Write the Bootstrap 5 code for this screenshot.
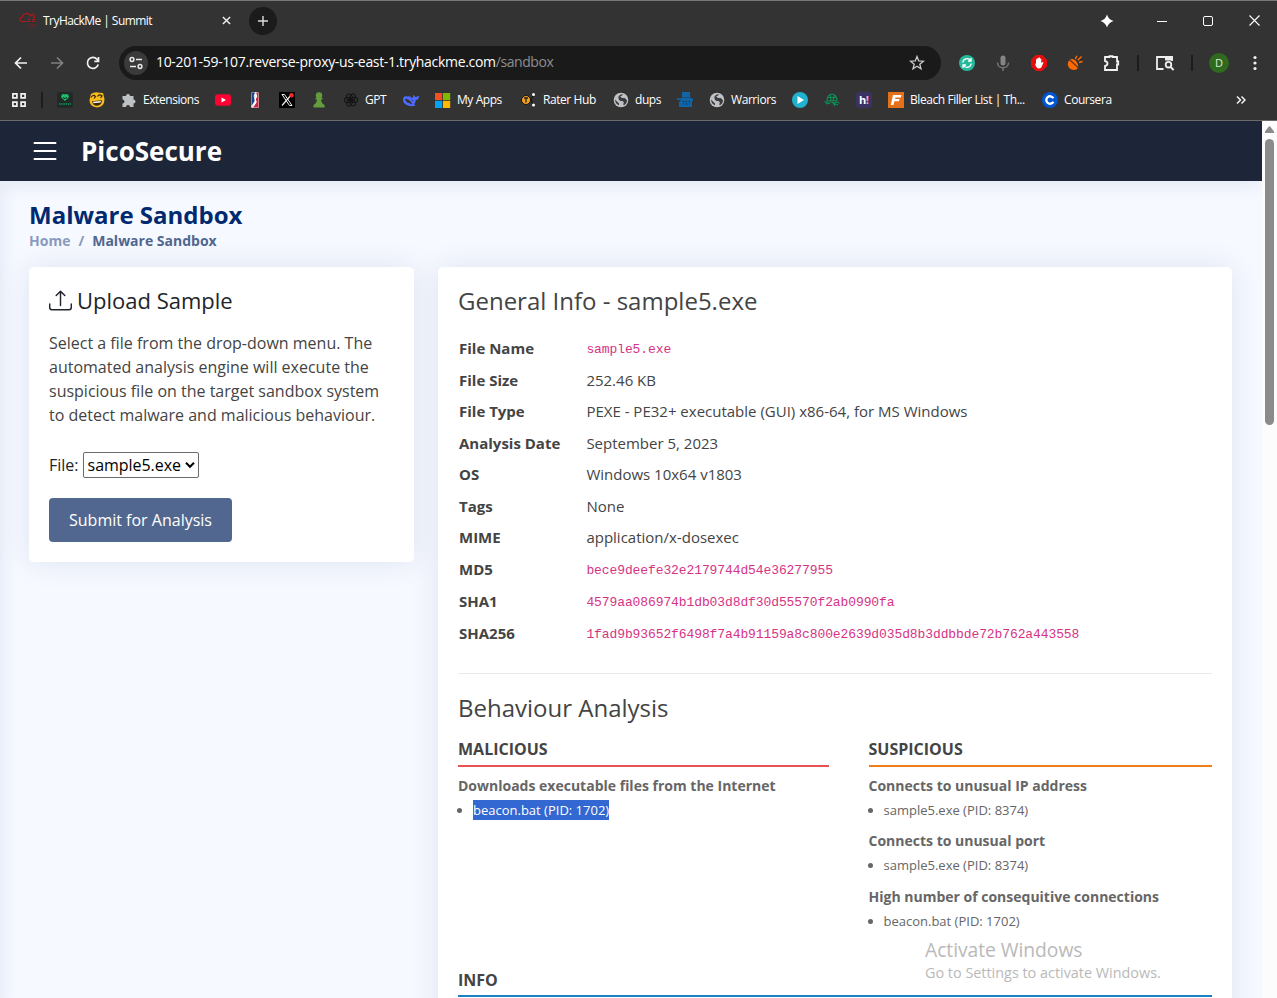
<!DOCTYPE html>
<html lang="en">
<head>
<meta charset="utf-8">
<title>TryHackMe | Summit</title>
<link rel="stylesheet" href="https://cdn.jsdelivr.net/npm/bootstrap@5.3.0/dist/css/bootstrap.min.css">
<style>
body{width:1277px;height:998px;overflow:hidden;font-family:"Open Sans","Noto Sans",sans-serif;color:#444;background:#f6f9ff}
svg{display:block;flex:none}
.chrome{height:121px;background:#333;border-top:1px solid #777;border-bottom:1px solid #6b6a68;color:#fff;font-size:12px}
.tabs{height:39px;padding-left:19px;padding-right:17px}
.tab-title{width:179px;letter-spacing:-.55px;margin-left:7px}
.newtab{width:28px;height:28px;background:#1b1b1b;border-radius:50%;margin-left:18px}
.sparkle{margin-right:43px}
.winbtn{margin-right:36px}
.toolbar{height:46px;padding-left:13px;padding-right:16px}
.toolbar .back{margin-right:20px}
.omni{width:822px;height:34px;border-radius:17px;background:#1a1a1a;margin-left:18px;padding:0 16px 0 5px;font-size:14px}
.site{width:24px;height:24px;border-radius:50%;background:#3a3a3a;margin-right:8px}
.host{letter-spacing:-.32px}
.path{color:#8d8f92;letter-spacing:-.42px}
.vsep{width:2px;height:16px;background:#1c1c1c}
.marks{height:28px;padding-left:12px}
.bm{gap:6px;margin-right:16px;white-space:nowrap;letter-spacing:-.43px}
.w-ext{width:56px}.w-gpt{width:22px}.w-app{width:48px}.w-rat{width:54px}.w-dup{width:26px}.w-war{width:45px}.w-ble{width:116px}.w-cou{width:48px}
.avatar{width:20px;height:20px;border-radius:50%;background:#2f6a1e;font-size:11px;color:#dcebd4}
.page{height:877px}
.view{width:1262px;overflow:hidden;background:#f6f9ff;position:relative}
.topnav{height:60px;background:#1d2538;box-shadow:0 2px 20px rgba(1,41,112,.1);padding:0 33px;gap:24px;position:relative;z-index:2}
.drawer{position:absolute;left:-20px;top:60px;width:20px;height:830px;box-shadow:0 0 20px rgba(1,41,112,.1)}
.brand{color:#fff;font-weight:700;font-size:26px;letter-spacing:0;line-height:30px}
.main{padding:20px 30px 0 29px}
.main h1{font-size:24px;line-height:28px;font-weight:700;color:#012970;margin:0}
.crumbs{font-size:14px;line-height:21px;font-weight:700;color:#899bbd;margin:1px 0 16px;gap:8px}
.crumbs b{color:#51678f;font-weight:700}
.panel{background:#fff;border:0;border-radius:5px;box-shadow:0 0 30px rgba(1,41,112,.1);padding:20px}
.upload{height:295px}
.upload h2{font-size:22px;line-height:26px;font-weight:400;color:#212529;gap:5px;margin:0 0 18px}
.upload p{font-size:16px;line-height:24px;margin:0 -10px 25px 0}
.pick{line-height:24px;height:26px;color:#212529;font-size:16px;gap:4px;margin-bottom:20px}
.pick .sel{width:116px;height:26px;border:1px solid #6b6b6b;border-radius:2px;color:#000;padding:0 3px 0 4px;letter-spacing:-.03px}
.send{width:183px;height:44px;padding:0;background:#51678f;border-radius:4px;color:#fff;font-size:16px}
.report{height:900px}
.report h2{font-size:24px;line-height:27px;font-weight:400;margin:0}
.facts{margin:18px 0 0 1px;width:752px}
.facts td,.facts th{height:31.5px;padding:0;font-size:15px;line-height:22px;vertical-align:middle}
.facts th{width:127.4px;font-weight:700}
.facts tr.mono td,.facts tr.mono th{height:32px}
.facts code{font-family:"Liberation Mono",monospace;font-size:13px;letter-spacing:-.1px;color:#d63384}
.rule{height:1px;background:#e9e9ea;margin:24px 0 20px}
.report .behaviour{margin-bottom:18px}
.group h3{font-size:16px;line-height:20px;font-weight:700;letter-spacing:0;margin:0;padding-bottom:6px;height:28px;border-bottom:2px solid}
.bad{border-color:#e55353!important}.sus{border-color:#ef7f1a!important}.inf{border-color:#1a82c3!important}
.group h4{font-size:14px;line-height:20px;font-weight:700;color:#666;margin:9px 0 4px}
.group ul{margin:0 0 11px;padding:0;list-style:none;font-size:13px;line-height:20px;color:#666}
.group li{display:flex;align-items:center;height:20px}
.group li::before{content:"";width:5px;height:5px;border-radius:50%;background:#666;margin:0 11px 0 -1px}
.group .more{margin-top:0}
.group .more + ul{margin-bottom:12px}
.final{margin-top:27px}
.final h3{height:27px;padding-bottom:5px}
.colA{width:371px;margin-right:39.5px}
.colB{flex:1}
.picked{background:#3367d1;color:#fff}
.water{position:absolute;left:925px;top:937px;color:#b9b9b9;z-index:5}
.water div:first-child{font-size:19.3px;line-height:26px;letter-spacing:-.05px}
.water div:last-child{font-size:14.4px;line-height:20px}
.scroll{width:15px;background:#fcfcfc;padding:5px 3px 0}
.thumb{width:9px;height:286px;border-radius:5px;background:#8b8b8b;margin-top:6px}
</style>
</head>
<body>
<div class="chrome">
  <div class="tabs d-flex align-items-center">
    <svg width="17" height="17" viewBox="0 0 17 17" fill="none" stroke="#b3161b" stroke-width="1.2"><path d="M7 9.500H3.200C-.3 9 .5 5 3.500 5 4 .8 9.500.2 11 4 14-.2 17 4.500 14.500 6.500"/><path d="M9 7.500h2M13 7.500h3M7.500 9.500h4M13 9.500h3" /><path d="M8 12.500h2M12 12.500h4M10 15.500h2M13.500 15.500h2" stroke="#7c1c1f"/></svg>
    <span class="tab-title text-nowrap">TryHackMe | Summit</span>
    <svg width="9" height="9" viewBox="0 0 10 10" stroke="#eee" stroke-width="1.600"><path d="M1 1l8 8M9 1l-8 8"/></svg>
    <div class="newtab d-flex align-items-center justify-content-center"><svg width="10" height="10" viewBox="0 0 10 10" stroke="#ddd" stroke-width="1.400"><path d="M5 0v10M0 5h10"/></svg></div>
    <div class="ms-auto d-flex align-items-center">
      <svg class="sparkle" width="14" height="14" viewBox="0 0 14 14" fill="#fff"><path d="M7 .5Q8.500 5.500 13.500 7 8.500 8.500 7 13.500 5.500 8.500.5 7 5.500 5.500 7 .5z"/></svg>
      <svg class="winbtn" width="10" height="10" viewBox="0 0 10 10" stroke="#fff"><path d="M0 5.500h10"/></svg>
      <svg class="winbtn" width="10" height="10" viewBox="0 0 10 10" fill="none" stroke="#fff"><rect x=".5" y=".5" width="9" height="9" rx="1.500"/></svg>
      <svg width="11" height="11" viewBox="0 0 11 11" stroke="#fff" stroke-width="1.100"><path d="M.5.500l10 10M10.500.500l-10 10"/></svg>
    </div>
  </div>
  <div class="toolbar d-flex align-items-center">
    <svg class="back" width="16" height="16" viewBox="0 0 16 16" fill="none" stroke="#f2f2f2" stroke-width="1.700"><path d="M14 8H3M8 2.500L2.500 8 8 13.500"/></svg>
    <svg class="back" width="16" height="16" viewBox="0 0 16 16" fill="none" stroke="#808080" stroke-width="1.700"><path d="M2 8h11M8 2.500L13.500 8 8 13.500"/></svg>
    <svg width="16" height="16" viewBox="0 0 16 16" fill="none" stroke="#f2f2f2" stroke-width="1.700"><path d="M13.200 9.500A5.500 5.500 0 1 1 12 4.200L13.500 6M13.500 2v4.300H9.300"/></svg>
    <div class="omni d-flex align-items-center">
      <div class="site d-flex align-items-center justify-content-center"><svg width="14" height="14" viewBox="0 0 14 14" fill="none" stroke="#e8e8e8" stroke-width="1.500"><circle cx="3" cy="3.500" r="1.900"/><path d="M7 3.500h6M1 10.500h6"/><circle cx="11" cy="10.500" r="1.900"/></svg></div>
      <span class="host text-nowrap pb-1">10-201-59-107.reverse-proxy-us-east-1.tryhackme.com</span><span class="path pb-1">/sandbox</span>
      <svg class="ms-auto" width="16" height="16" viewBox="0 0 16 16" fill="none" stroke="#ccc" stroke-width="1.300"><path d="M8 1.500l1.700 4.400 4.800.3-3.700 3 1.200 4.700L8 11.300l-4 2.600 1.200-4.700-3.700-3 4.800-.3z"/></svg>
    </div>
    <svg width="16" height="16" viewBox="0 0 16 16" style="margin-left:18px"><circle cx="8" cy="8" r="8" fill="#27b99c"/><path d="M3.800 7.500a4.300 4.300 0 0 1 7.800-2M12.200 8.500a4.300 4.300 0 0 1-7.800 2M12 3v3H9M4 13v-3h3" fill="none" stroke="#fff" stroke-width="1.300"/></svg>
    <svg width="14" height="17" viewBox="0 0 14 17" style="margin-left:21px"><rect x="4.500" y=".5" width="5" height="10" rx="2.500" fill="#858585"/><path d="M1.500 7.500c0 7 11 7 11 0M7 12.500V16" fill="none" stroke="#777" stroke-width="1.500"/></svg>
    <svg width="16" height="16" viewBox="0 0 16 16" style="margin-left:21px"><path d="M4.800 0h6.400L16 4.800v6.400L11.200 16H4.800L0 11.200V4.800z" fill="#e60d0d"/><path d="M4 8.500l1 .5V4.500q.7-.8 1.300 0V3.300q.7-.8 1.300 0V2.700q.8-.8 1.400 0v1q.8-.6 1.300.2V8l1.500-1q1 .2.500 1l-2 4.500Q7 15 5 11.500z" fill="#fff"/></svg>
    <svg width="16" height="16" viewBox="0 0 16 16" style="margin-left:20px"><path d="M2.300 5.300A5.700 5.700 0 1 0 11 13z" fill="#ff6a00"/><path d="M3 4.300Q6.500 3 9 6t2.300 6.200z" fill="#ff6a00"/><path d="M2.500 4.500l9 8.500" stroke="#633514" stroke-width="1"/><path d="M8.500 4L9.800.8M10.800 5.300l3.700-3.800M12 7.500l3.500-1" stroke="#ff6a00" stroke-width="1.400"/></svg>
    <svg width="18" height="18" viewBox="0 0 18 18" fill="none" stroke="#f2f2f2" stroke-width="1.800" style="margin-left:20px"><path d="M2 3h4.500V2.200h3V3H14v4.500h1.200v3H14V16H2v-4q2.500-.5 2.500-2.500T2 7z"/></svg>
    <div class="vsep" style="margin-left:16px"></div>
    <svg width="19" height="16" viewBox="0 0 19 16" fill="none" stroke="#eee" stroke-width="1.800" style="margin-left:17px"><path d="M7.500 14H1V2h15v4"/><path d="M9 1h8v4.500h-8z" fill="#eee" stroke="none"/><circle cx="12.500" cy="9.700" r="2.800"/><path d="M14.600 12l3 3"/></svg>
    <div class="vsep" style="margin-left:16px"></div>
    <div class="avatar d-flex align-items-center justify-content-center" style="margin-left:16px">D</div>
    <svg class="ms-auto" width="12" height="16" viewBox="0 0 12 16" fill="#f2f2f2"><circle cx="6" cy="2.500" r="1.600"/><circle cx="6" cy="8" r="1.600"/><circle cx="6" cy="13.500" r="1.600"/></svg>
  </div>
  <div class="marks d-flex align-items-center">
    <svg width="14" height="14" viewBox="0 0 14 14" fill="none" stroke="#f2f2f2" stroke-width="1.700"><path d="M.9.900h4v4h-4zM9.100.900h4v4h-4zM.9 9.100h4v4h-4zM9.100 9.100h4v4h-4z"/></svg>
    <div class="vsep" style="margin:0 14px 0 15px"></div>
    <div class="bm"><svg width="16" height="16" viewBox="0 0 16 16"><rect width="16" height="16" rx="2" fill="#222a27"/><path d="M8 9L4 5Q4.500 1 8 2.500q3.500-1.500 4 2.500z" fill="#1ec06b"/><path d="M6 5.500l2 1 2-1" stroke="#123" fill="none"/><path d="M2 12h12" stroke="#137a49" stroke-width="1.800" stroke-dasharray="1.500 .7"/></svg></div>
    <div class="bm"><svg width="16" height="16" viewBox="0 0 16 16"><path d="M2 2Q6-.5 10 .8l4 .2 1.500 6Q15.500 15 8 15.500.5 15 .5 8z" fill="#f8bd1c"/><path d="M3 9.200l10-1q-.5 5.300-5 5.500-4 0-5-4.500z" fill="#3b2505"/><path d="M4 9.700l8-.8-.5 1.700-7 .6z" fill="#fff"/><path d="M2 5.500Q4 2 6.500 4.500L5 6.500M8.500 4.500q2-3 4.500-.5l-1.500 2" fill="none" stroke="#3b2505" stroke-width="1.200"/></svg></div>
    <div class="bm d-flex align-items-center"><svg width="16" height="16" viewBox="0 0 16 16" fill="#bdc1c6"><path d="M1.500 4H5a2 2 0 1 1 4 0h3.500v3.500a2 2 0 1 1 0 4V15H9a2 2 0 1 0-4 0H1.500v-3.500a2 2 0 1 0 0-4z"/></svg><span class="w-ext">Extensions</span></div>
    <div class="bm"><svg width="16" height="16" viewBox="0 0 16 16"><rect y="2.200" width="16" height="11.600" rx="3" fill="#ff0033"/><path d="M6.500 5.500L11 8l-4.500 2.500z" fill="#fff"/></svg></div>
    <div class="bm"><svg width="16" height="16" viewBox="0 0 16 16"><rect x="4" width="8" height="16" rx="1.500" fill="#ddd"/><path d="M4.500.500H8L6.500 4l1.500 4-3.500 6z" fill="#17408b"/><path d="M9.500.500h2v15H6l3-4.500-.5-4 1.500-2z" fill="#c9273d"/><path d="M8 2l1.500 2L8 7l1 3-3 4" fill="none" stroke="#fff" stroke-width="1.400"/></svg></div>
    <div class="bm"><svg width="16" height="16" viewBox="0 0 16 16"><rect width="16" height="16" fill="#000"/><path d="M3 2.500h2.500l7.500 11h-2.500z" fill="none" stroke="#eee"/><path d="M12.500 2.500L3 13.500" stroke="#eee" stroke-width="1.200"/><circle cx="12.500" cy="3.200" r="2.200" fill="#f32a2a"/></svg></div>
    <div class="bm"><svg width="16" height="16" viewBox="0 0 16 16" fill="#629c3d"><circle cx="8" cy="3.500" r="3.200"/><path d="M4.500 6h7v1.500H10q.5 4 3.500 5.500v2.500h-11V13Q5.500 11.500 6 7.500H4.500z"/></svg></div>
    <div class="bm d-flex align-items-center"><svg width="16" height="16" viewBox="0 0 16 16" fill="none" stroke="#141414" stroke-width="1"><g id="knot"><ellipse cx="9.500" cy="5.500" rx="2.600" ry="3.800" transform="rotate(20 9.500 5.500)"/><ellipse cx="6.500" cy="10.500" rx="2.600" ry="3.800" transform="rotate(20 6.500 10.500)"/></g><use href="#knot" transform="rotate(60 8 8)"/><use href="#knot" transform="rotate(120 8 8)"/></svg><span class="w-gpt">GPT</span></div>
    <div class="bm"><svg width="16" height="16" viewBox="0 0 16 16" fill="#4d6bfe"><path d="M0 7.500Q0 3 5 4.500q2-.8 4 1.500 1.500-.5 1-3 1.500 0 2 1.800 1.800.7 4-1.300.3 4-3.200 4.500-.3 3-1.800 4l1.500 1.500Q8 15 5 13.500 0 12 0 7.500z"/><path d="M2.500 7q4 .5 6.500 5-1.500-.2-2.500-1.200Q3.500 11 2.500 7zM8.500 7.500l2 1.500" fill="#333" stroke="#333" stroke-width=".8"/></svg></div>
    <div class="bm d-flex align-items-center"><svg width="16" height="16" viewBox="0 0 16 16"><path d="M0 1h7.200v7H0z" fill="#f35022"/><path d="M8 1h7.200v7H8z" fill="#7fba00"/><path d="M0 8.800h7.200V16H0z" fill="#01a4ef"/><path d="M8 8.800h7.200V16H8z" fill="#ffb901"/></svg><span class="w-app">My Apps</span></div>
    <div class="bm d-flex align-items-center"><svg width="16" height="16" viewBox="0 0 16 16"><circle cx="5" cy="8" r="4.500" fill="#f5a21b" stroke="#111"/><path d="M3 6h4M5 6v4.500" stroke="#222" stroke-width="1.300"/><path d="M12.500 3Q8.500 8 12.500 13" fill="none" stroke="#111"/><circle cx="12.500" cy="2.500" r="1.500" fill="#fff"/><circle cx="12.500" cy="13" r="1.500" fill="#fff"/></svg><span class="w-rat">Rater Hub</span></div>
    <div class="bm d-flex align-items-center"><svg width="16" height="16" viewBox="0 0 16 16"><g id="globe"><circle cx="8" cy="8" r="7.300" fill="#bdc1c6"/><path d="M2 7.500l4 4v1.800Q2 11.500 2 7.500zM5.500 4.500q1.500-2.500 4.500-2.300-1 2-3 2.300l2 1.500h2.500q1.500.5 2.500 2.500 0 3-2.500 4.500l-1.500-.5 1-2-1.500-1.500H7.500Q5 7.500 5.500 4.500z" fill="#3b3b3b"/></g></svg><span class="w-dup">dups</span></div>
    <div class="bm"><svg width="16" height="16" viewBox="0 0 16 16" fill="#0e65a8"><path d="M5 0h8v5H5zM0 6h1.500l1 .5H4V5.500h10v1h2V9h-1v6H2v-5l1.500-1V8H0z"/><path d="M5.500 9.500h8M6 12h7" stroke="#17354f" stroke-width="1.200" stroke-dasharray="1.500 1.500"/></svg></div>
    <div class="bm d-flex align-items-center"><svg width="16" height="16" viewBox="0 0 16 16"><use href="#globe"/></svg><span class="w-war">Warriors</span></div>
    <div class="bm"><svg width="16" height="16" viewBox="0 0 16 16"><circle cx="8" cy="8" r="8" fill="#20b2cf"/><path d="M5.500 4L12 8l-6.500 4z" fill="#fff"/></svg></div>
    <div class="bm"><svg width="16" height="16" viewBox="0 0 16 16" fill="none" stroke="#0d9257" stroke-width="1.100"><path d="M3 9Q3 2.500 8 2q4.500.5 5 6.500zM6 2.500l1 6M10.500 3L9 8.500M4 5.500h8.500M.5 9.500l3 1.500 9-1 3 1M2 12l4-1M14 13L9 11l2 3"/></svg></div>
    <div class="bm"><svg width="16" height="16" viewBox="0 0 16 16"><rect width="16" height="16" rx="4" fill="#3c3163"/><text x="3" y="12" font-size="11" font-weight="700" fill="#fff" font-family="Open Sans">h<tspan fill="#ff9fc5">!</tspan></text></svg></div>
    <div class="bm d-flex align-items-center"><svg width="16" height="16" viewBox="0 0 16 16"><rect width="16" height="16" fill="#e4711a"/><path d="M5 3h8.500l-.6 2.500H7.500L7 7h4.500L11 9.300H6.400L5.500 13H2.800z" fill="#fff"/></svg><span class="w-ble">Bleach Filler List | Th...</span></div>
    <div class="bm d-flex align-items-center"><svg width="16" height="16" viewBox="0 0 16 16"><circle cx="8" cy="8" r="8" fill="#0056d2"/><path d="M11.300 6.300a3.700 3.700 0 1 0 0 3.400" fill="none" stroke="#fff" stroke-width="2.400"/></svg><span class="w-cou">Coursera</span></div>
    <svg class="ms-auto" style="margin-right:31px" width="10" height="10" viewBox="0 0 10 10" fill="none" stroke="#f2f2f2" stroke-width="1.500"><path d="M1 1.500L4.500 5 1 8.500M5.500 1.500L9 5 5.500 8.500"/></svg>
  </div>
</div>
<div class="page d-flex">
  <div class="view">
    <header class="topnav d-flex align-items-center">
      <svg width="24" height="20" viewBox="0 0 24 20" stroke="#fff" stroke-width="2" stroke-linecap="round"><path d="M1.500 2h21M1.500 10h21M1.500 18h21"/></svg>
      <span class="brand">PicoSecure</span>
    </header>
    <div class="drawer"></div>
    <main class="main">
      <h1>Malware Sandbox</h1>
      <div class="crumbs d-flex"><span>Home</span><span>/</span><b>Malware Sandbox</b></div>
      <div class="row">
        <div class="col-4">
          <section class="card panel upload">
            <h2 class="d-flex align-items-center"><svg width="23" height="23" viewBox="0 0 16 16" fill="#212529"><path d="M.5 9.900a.5.5 0 0 1 .5.500v2.500a1 1 0 0 0 1 1h12a1 1 0 0 0 1-1v-2.500a.5.5 0 0 1 1 0v2.500a2 2 0 0 1-2 2H2a2 2 0 0 1-2-2v-2.500a.5.5 0 0 1 .5-.5z"/><path d="M7.646 1.146a.5.5 0 0 1 .708 0l3 3a.5.5 0 0 1-.708.708L8.500 2.707V11.500a.5.5 0 0 1-1 0V2.707L5.354 4.854a.5.5 0 1 1-.708-.708l3-3z"/></svg>Upload Sample</h2>
            <p>Select a file from the drop-down menu. The<br>automated analysis engine will execute the<br>suspicious file on the target sandbox system<br>to detect malware and malicious behaviour.</p>
            <div class="pick d-flex align-items-center"><span>File:</span><div class="sel d-flex align-items-center justify-content-between"><span>sample5.exe</span><svg width="10" height="8" viewBox="0 0 10 8" fill="none" stroke="#000" stroke-width="2"><path d="M1 1.800l4 4 4-4"/></svg></div></div>
            <button class="btn send">Submit for Analysis</button>
          </section>
        </div>
        <div class="col-8">
          <section class="card panel report">
            <h2>General Info - sample5.exe</h2>
            <table class="facts">
              <tr class="mono"><th>File Name</th><td><code>sample5.exe</code></td></tr>
              <tr><th>File Size</th><td>252.46 KB</td></tr>
              <tr><th>File Type</th><td>PEXE - PE32+ executable (GUI) x86-64, for MS Windows</td></tr>
              <tr><th>Analysis Date</th><td>September 5, 2023</td></tr>
              <tr><th>OS</th><td>Windows 10x64 v1803</td></tr>
              <tr><th>Tags</th><td>None</td></tr>
              <tr><th>MIME</th><td>application/x-dosexec</td></tr>
              <tr class="mono"><th>MD5</th><td><code>bece9deefe32e2179744d54e36277955</code></td></tr>
              <tr class="mono"><th>SHA1</th><td><code>4579aa086974b1db03d8df30d55570f2ab0990fa</code></td></tr>
              <tr class="mono"><th>SHA256</th><td><code>1fad9b93652f6498f7a4b91159a8c800e2639d035d8b3ddbbde72b762a443558</code></td></tr>
            </table>
            <div class="rule"></div>
            <h2 class="behaviour">Behaviour Analysis</h2>
            <div class="d-flex">
              <div class="group colA">
                <h3 class="bad">MALICIOUS</h3>
                <h4>Downloads executable files from the Internet</h4>
                <ul><li><span class="picked">beacon.bat (PID: 1702)</span></li></ul>
              </div>
              <div class="group colB">
                <h3 class="sus">SUSPICIOUS</h3>
                <h4>Connects to unusual IP address</h4>
                <ul><li>sample5.exe (PID: 8374)</li></ul>
                <h4 class="more">Connects to unusual port</h4>
                <ul><li>sample5.exe (PID: 8374)</li></ul>
                <h4 class="more">High number of consequitive connections</h4>
                <ul><li>beacon.bat (PID: 1702)</li></ul>
              </div>
            </div>
            <div class="group final"><h3 class="inf">INFO</h3></div>
          </section>
        </div>
      </div>
    </main>
  </div>
  <div class="scroll">
    <svg width="9" height="7" viewBox="0 0 9 7" fill="#8b8b8b"><path d="M3.800.600q.7-.7 1.400 0L9 5.500V7H0V5.500z"/></svg>
    <div class="thumb"></div>
  </div>
</div>
<div class="water"><div>Activate Windows</div><div>Go to Settings to activate Windows.</div></div>
<script src="https://cdn.jsdelivr.net/npm/bootstrap@5.3.0/dist/js/bootstrap.bundle.min.js"></script>
</body>
</html>
